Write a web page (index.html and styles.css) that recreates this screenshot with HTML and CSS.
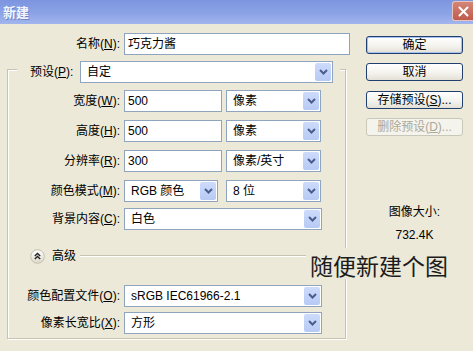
FILE: index.html
```html
<!DOCTYPE html>
<html lang="zh-CN">
<head>
<meta charset="utf-8">
<title>新建</title>
<link rel="stylesheet" href="styles.css">
</head>
<body>
<div class="dialog">
  <div class="titlebar">
    <span class="title">新建</span>
    <span class="close"><svg width="11" height="11" viewBox="0 0 11 11"><path d="M1.5 1.5 L9.5 9.5 M9.5 1.5 L1.5 9.5" stroke="#fff" stroke-width="2" stroke-linecap="round"/></svg></span>
  </div>
  <div class="main">
    <div class="left">
      <div class="row name-row">
        <label class="lbl lbl-name">名称(<u>N</u>):</label>
        <div class="field w-name">巧克力酱</div>
      </div>
      <div class="group">
        <div class="group-head">
          <label class="lbl-head">预设(<u>P</u>):</label>
          <div class="combo w-preset"><span class="val">自定</span><span class="arrow"><svg width="9" height="6" viewBox="0 0 9 6"><path d="M1 1 L4.5 4.5 L8 1" fill="none" stroke="#4a5d8c" stroke-width="2"/></svg></span></div>
        </div>
        <div class="row r1">
          <label class="lbl">宽度(<u>W</u>):</label>
          <div class="field w-num">500</div>
          <div class="combo w-unit"><span class="val">像素</span><span class="arrow"><svg width="9" height="6" viewBox="0 0 9 6"><path d="M1 1 L4.5 4.5 L8 1" fill="none" stroke="#4a5d8c" stroke-width="2"/></svg></span></div>
        </div>
        <div class="row r2">
          <label class="lbl">高度(<u>H</u>):</label>
          <div class="field w-num">500</div>
          <div class="combo w-unit"><span class="val">像素</span><span class="arrow"><svg width="9" height="6" viewBox="0 0 9 6"><path d="M1 1 L4.5 4.5 L8 1" fill="none" stroke="#4a5d8c" stroke-width="2"/></svg></span></div>
        </div>
        <div class="row r3">
          <label class="lbl">分辨率(<u>R</u>):</label>
          <div class="field w-num">300</div>
          <div class="combo w-unit"><span class="val">像素/英寸</span><span class="arrow"><svg width="9" height="6" viewBox="0 0 9 6"><path d="M1 1 L4.5 4.5 L8 1" fill="none" stroke="#4a5d8c" stroke-width="2"/></svg></span></div>
        </div>
        <div class="row r4">
          <label class="lbl">颜色模式(<u>M</u>):</label>
          <div class="combo w-mode"><span class="val">RGB 颜色</span><span class="arrow"><svg width="9" height="6" viewBox="0 0 9 6"><path d="M1 1 L4.5 4.5 L8 1" fill="none" stroke="#4a5d8c" stroke-width="2"/></svg></span></div>
          <div class="combo w-unit"><span class="val">8 位</span><span class="arrow"><svg width="9" height="6" viewBox="0 0 9 6"><path d="M1 1 L4.5 4.5 L8 1" fill="none" stroke="#4a5d8c" stroke-width="2"/></svg></span></div>
        </div>
        <div class="row r5">
          <label class="lbl">背景内容(<u>C</u>):</label>
          <div class="combo w-bg"><span class="val">白色</span><span class="arrow"><svg width="9" height="6" viewBox="0 0 9 6"><path d="M1 1 L4.5 4.5 L8 1" fill="none" stroke="#4a5d8c" stroke-width="2"/></svg></span></div>
        </div>
        <div class="advanced">
          <span class="adv-btn"><svg width="15" height="15" viewBox="0 0 15 15"><defs><linearGradient id="g" x1="0" y1="0" x2="0" y2="1"><stop offset="0" stop-color="#ffffff"/><stop offset="1" stop-color="#dcd8c8"/></linearGradient></defs><circle cx="7.5" cy="7.5" r="6.8" fill="url(#g)" stroke="#c2bfae" stroke-width="1"/><path d="M4.8 7 L7.5 4.5 L10.2 7 M4.8 10 L7.5 7.5 L10.2 10" fill="none" stroke="#222" stroke-width="1.4"/></svg></span>
          <span class="adv-text">高级</span>
          <span class="adv-line"></span>
        </div>
        <div class="row r6">
          <label class="lbl">颜色配置文件(<u>O</u>):</label>
          <div class="combo w-bg"><span class="val">sRGB IEC61966-2.1</span><span class="arrow"><svg width="9" height="6" viewBox="0 0 9 6"><path d="M1 1 L4.5 4.5 L8 1" fill="none" stroke="#4a5d8c" stroke-width="2"/></svg></span></div>
        </div>
        <div class="row r7">
          <label class="lbl">像素长宽比(<u>X</u>):</label>
          <div class="combo w-bg"><span class="val">方形</span><span class="arrow"><svg width="9" height="6" viewBox="0 0 9 6"><path d="M1 1 L4.5 4.5 L8 1" fill="none" stroke="#4a5d8c" stroke-width="2"/></svg></span></div>
        </div>
      </div>
    </div>
    <div class="right">
      <div class="btn default">确定</div>
      <div class="btn">取消</div>
      <div class="btn b-save">存储预设(<u>S</u>)...</div>
      <div class="btn disabled">删除预设(<u>D</u>)...</div>
      <div class="info">
        <div class="info-label">图像大小:</div>
        <div class="info-value">732.4K</div>
      </div>
    </div>
  </div>
  <div class="note">随便新建个图</div>
</div>
</body>
</html>
```

FILE: styles.css
```css
* { box-sizing: border-box; }
html, body { margin: 0; padding: 0; }
body {
  width: 473px;
  height: 351px;
  overflow: hidden;
  background: #ece9d8;
  font-family: "Liberation Sans", "Noto Sans CJK SC", sans-serif;
  font-size: 12px;
  color: #000;
}
.dialog { position: relative; width: 473px; height: 351px; }

.titlebar {
  height: 24px;
  display: flex;
  align-items: center;
  justify-content: space-between;
  background: linear-gradient(#7c95df, #8ba3e6 55%, #a2b5ed);
}
.title {
  padding-left: 3px;
  font-family: "Noto Sans CJK SC", sans-serif;
  font-weight: bold;
  font-size: 13px;
  line-height: 16px;
  color: #f3f6ff;
  text-shadow: 1px 1px 0 #6f86c9;
}
.close {
  width: 21px;
  height: 20px;
  margin-top: -2px;
  display: flex;
  align-items: center;
  justify-content: center;
  background: linear-gradient(#d38676, #bf5b4c);
  border: 1px solid #e7c5be;
  border-right: none;
  border-radius: 3px 0 0 3px;
}

.main { display: flex; padding-top: 9px; }
.left { width: 350px; flex: none; }
.right {
  width: 97px;
  margin-left: 16px;
  padding-top: 3px;
  display: flex;
  flex-direction: column;
}

.row { display: flex; align-items: center; height: 22px; }
.lbl {
  width: 112px;
  margin-right: 4px;
  text-align: right;
  line-height: 16px;
  white-space: nowrap;
}
.lbl-name { width: 120px; }
u { text-decoration: underline; text-underline-offset: 1px; }

.field, .combo {
  height: 22px;
  background: #fff;
  border: 1px solid #8fa5bf;
  display: flex;
  align-items: center;
  white-space: nowrap;
  line-height: 16px;
}
.field { padding-left: 3px; }
.combo { padding-left: 6px; }
.combo .val { flex: 1; overflow: hidden; }
.arrow {
  flex: none;
  width: 16px;
  height: 18px;
  margin: 1px;
  display: flex;
  align-items: center;
  justify-content: center;
  background: linear-gradient(#cddbfb, #b7caf5);
  border-radius: 2px;
}

.w-name { width: 226px; }
.w-preset { width: 253px; }
.w-num { width: 98px; margin-right: 4px; }
.w-unit { width: 95px; }
.w-mode { width: 94px; margin-right: 8px; }
.w-bg { width: 198px; }

.group {
  margin: 14px 0 0 7px;
  width: 339px;
  border: 1px solid #c6c3b1;
  box-shadow: inset 1px 1px 0 #fff, 1px 1px 0 #fff;
  padding-bottom: 4px;
}
.group-head {
  margin: -9px 0 0 9px;
  width: 323px;
  height: 22px;
  padding: 0 7px 0 13px;
  display: flex;
  align-items: center;
  background: #ece9d8;
}
.lbl-head { width: 50px; line-height: 16px; white-space: nowrap; }

.r1 { margin-top: 7px; }
.r2, .r3, .r4 { margin-top: 8px; }
.r5 { margin-top: 6px; }
.r6 { margin-top: 21px; }
.r7 { margin-top: 5px; }

.advanced {
  margin-top: 18px;
  height: 16px;
  display: flex;
  align-items: center;
  padding-left: 22px;
}
.adv-btn { width: 15px; height: 15px; display: flex; }
.adv-text { margin-left: 7px; line-height: 16px; }
.adv-line {
  flex: 1;
  margin-left: 4px;
  height: 2px;
  border-top: 1px solid #c6c3b1;
  border-bottom: 1px solid #fff;
}

.btn {
  height: 18px;
  border: 1px solid #22406f;
  border-radius: 3px;
  background: linear-gradient(#ffffff, #f4f3ee 55%, #e3e0d5);
  display: flex;
  align-items: center;
  justify-content: center;
  line-height: 16px;
  white-space: nowrap;
  margin-bottom: 9px;
}
.btn.default { box-shadow: inset 0 0 0 1px #a9c1ee; }
.b-save { margin-top: 1px; }
.btn.disabled {
  border-color: #c9c7ba;
  color: #aca899;
  background: #f4f3ec;
}
.info {
  margin-top: 59px;
  display: flex;
  flex-direction: column;
  align-items: center;
  line-height: 16px;
}
.info-value { margin-top: 7px; }

.note {
  position: absolute;
  left: 306px;
  top: 248px;
  padding: 5px 4px 2px 4px;
  background: #ece9d8;
  font-family: "Noto Sans CJK SC", sans-serif;
  font-size: 23px;
  line-height: 24px;
  color: #1c1c1c;
  white-space: nowrap;
}
```
